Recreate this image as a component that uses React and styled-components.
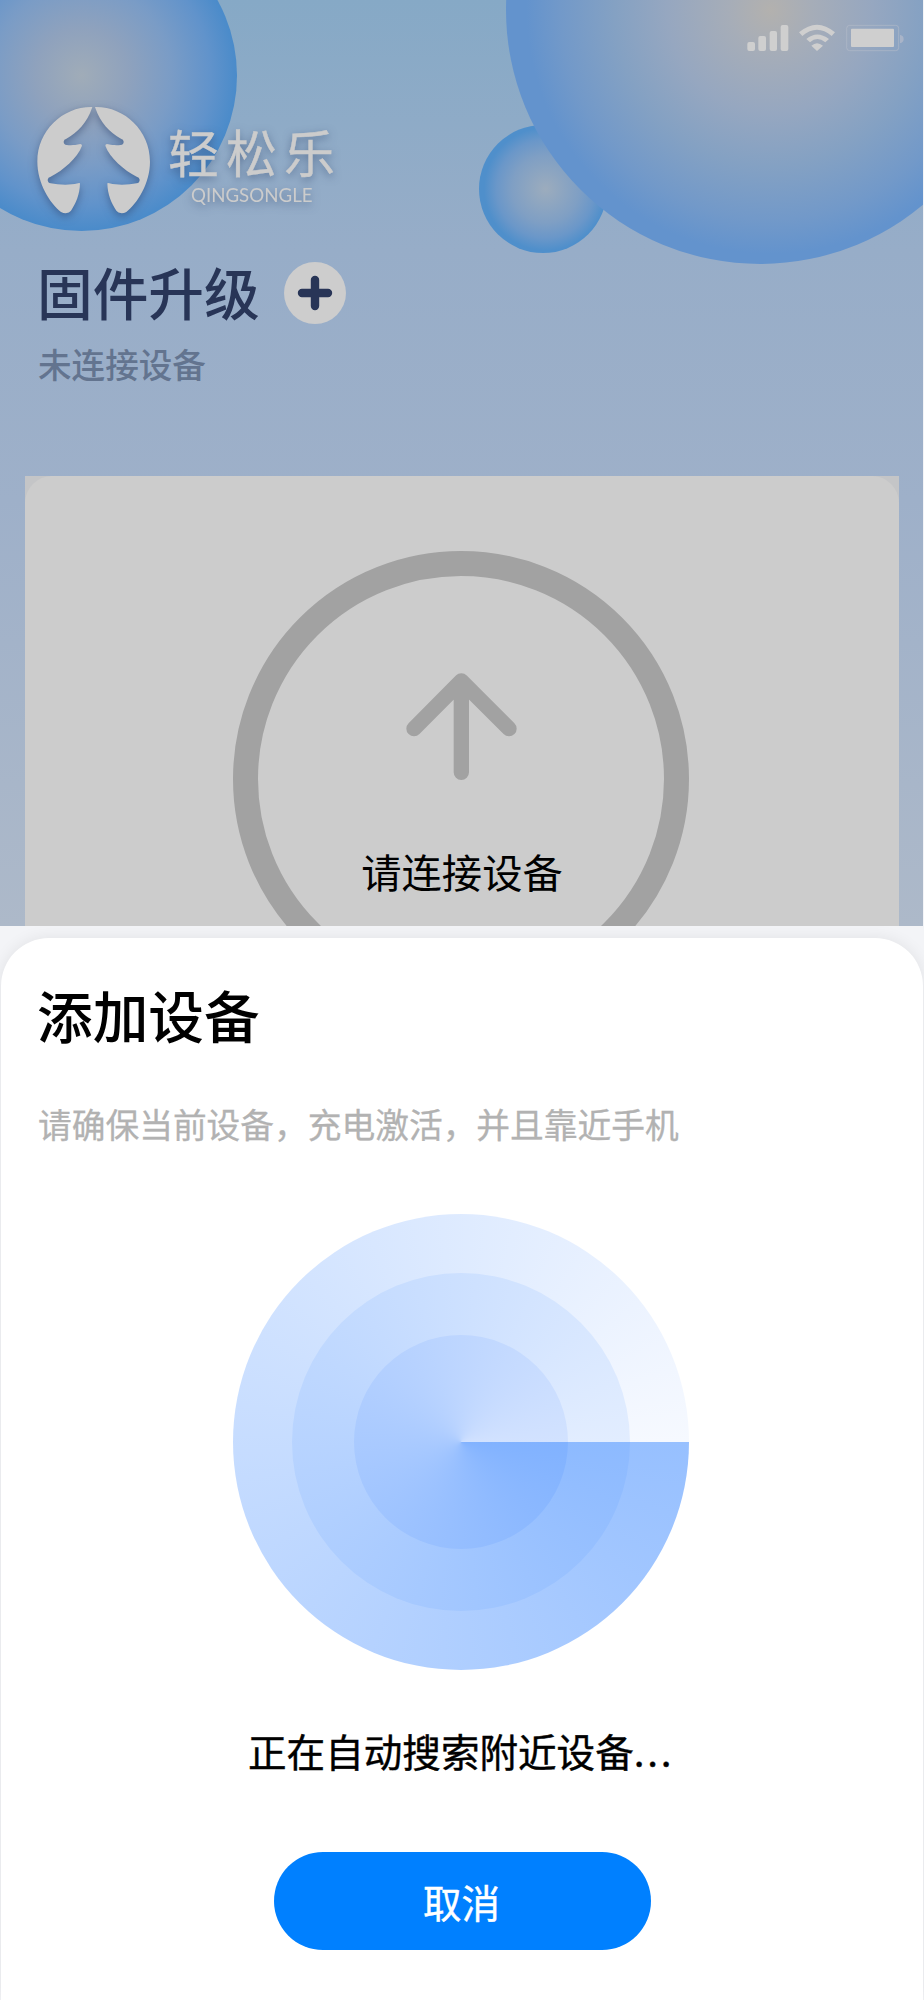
import React from 'react'
import styled, { createGlobalStyle } from 'styled-components'

const GlobalStyle = createGlobalStyle`
  * {
    box-sizing: border-box;
  }
  body {
    margin: 0;
    background: #fff;
    font-family: 'Noto Sans CJK SC', 'Noto Sans', sans-serif;
  }
`

const Screen = styled.div`
  width: 924px;
  height: 2000px;
  display: flex;
  flex-direction: column;
  overflow: hidden;
  background: #f3f4f7;
`

const Hero = styled.header`
  position: relative;
  width: 923px;
  height: 926px;
  flex: none;
  display: flex;
  flex-direction: column;
  overflow: hidden;
  background: linear-gradient(180deg, #86a9c6 0, #97adc8 250px, #9eb0c9 500px, #adb9c9 926px);
`

const Bubble = styled.div`
  position: absolute;
  left: ${({ $x, $r }) => $x - $r}px;
  top: ${({ $y, $r }) => $y - $r}px;
  width: ${({ $r }) => $r * 2}px;
  height: ${({ $r }) => $r * 2}px;
  border-radius: 50%;
  background: radial-gradient(circle closest-side at ${({ $focus = '50% 50%' }) => $focus}, ${({ $stops }) => $stops});
`

const StatusBar = styled.div`
  position: relative;
  flex: none;
  height: 106px;
  padding: 24px 17px 0 0;
  display: flex;
  justify-content: flex-end;
  svg {
    display: block;
  }
`

const Brand = styled.div`
  position: relative;
  flex: none;
  height: 110px;
  padding-left: 35px;
  display: flex;
  filter: drop-shadow(0 3px 4px rgba(40, 60, 100, 0.5));
  svg {
    display: block;
    flex: none;
  }
`

const BrandText = styled.div`
  display: flex;
  flex-direction: column;
  gap: 9px;
  padding: 20px 0 0 15px;
  color: #ccc;
`

const BrandName = styled.div`
  font-size: 51px;
  line-height: 50px;
  letter-spacing: 7px;
  font-weight: 400;
  -webkit-text-stroke: 0.4px currentColor;
`

const BrandLatin = styled.div`
  padding-left: 23px;
  font-family: Lato, sans-serif;
  font-size: 18.7px;
  line-height: 20px;
`

const TitleRow = styled.div`
  position: relative;
  flex: none;
  height: 62px;
  margin-top: 46px;
  padding-left: 37px;
  display: flex;
  align-items: center;
  gap: 24px;
`

const Title = styled.h1`
  margin: 0;
  padding-bottom: ${({ $lift = 0 }) => $lift}px;
  font-size: 55.7px;
  line-height: 62px;
  font-weight: 500;
  color: ${({ $color = '#000' }) => $color};
`

const AddButton = styled.button`
  width: 62px;
  height: 62px;
  padding: 0;
  border: 0;
  border-radius: 50%;
  background: #cdcdcd;
  svg {
    display: block;
  }
`

const Status = styled.p`
  flex: none;
  margin: 20px 0 0 38px;
  font-size: 33.6px;
  line-height: 40px;
  font-weight: 500;
  color: #63748f;
`

const CardFrame = styled.div`
  flex: 1;
  min-height: 0;
  margin: 92px 24px 0 25px;
  background: #c4c5c7;
`

const Card = styled.section`
  height: 600px;
  padding-top: 75px;
  border-radius: 27px;
  background: #ccc;
`

const Ring = styled.div`
  width: 456px;
  height: 456px;
  margin-left: 208px;
  padding-top: 97px;
  border: 25px solid #a2a2a2;
  border-radius: 50%;
  display: flex;
  flex-direction: column;
  align-items: center;
  gap: 65px;
`

const RingLabel = styled.div`
  padding-left: 2px;
  font-size: 40.3px;
  line-height: 50px;
  color: #000;
`

const SheetFrame = styled.div`
  flex: 1;
  padding: 12px 1px 0;
  display: flex;
`

const Sheet = styled.section`
  flex: 1;
  display: flex;
  flex-direction: column;
  padding: 45px 37px 0 36px;
  border-radius: 48px 48px 0 0;
  background: #fff;
  box-shadow: 0 0 16px rgba(0, 0, 0, 0.08);
`

const Hint = styled.p`
  margin: 59px 0 0 1px;
  font-size: 33.72px;
  line-height: 40px;
  color: #b2b2b2;
  -webkit-text-stroke: 0.3px currentColor;
`

const Disc = styled.div`
  width: ${({ $size }) => $size}px;
  height: ${({ $size }) => $size}px;
  flex: none;
  border-radius: 50%;
  display: flex;
  align-items: center;
  justify-content: center;
  background: conic-gradient(from 90deg, ${({ $from }) => $from}, ${({ $to }) => $to});
`

const Radar = styled.div`
  margin: 70px 0 0 196px;
`

const Searching = styled.p`
  margin: 55px 0 0 211px;
  font-size: 38.6px;
  line-height: 50px;
  color: #000;
  -webkit-text-stroke: 0.4px currentColor;
  span {
    letter-spacing: 2.8px;
  }
`

const CancelButton = styled.button`
  width: 377px;
  height: 98px;
  margin: 77px 0 0 237px;
  padding: 0 2px 0 0;
  border: 0;
  border-radius: 49px;
  background: #0080ff;
  color: #fff;
  font-family: inherit;
  font-size: 38.6px;
  line-height: 50px;
  -webkit-text-stroke: 0.4px currentColor;
`

const halfTree =
  'M277 81C190 79 112 150 112 245C112 310 150 370 183 396Q190 400 197 400Q208 399 213 392C228 370 239 345 240 310Q238 308 234 310C205 317 175 314 152 310Q143 308 143 299Q144 291 152 290C190 270 232 235 246 197Q246 192 241 192C225 196 212 196 200 195Q191 193 191 185Q192 178 198 177C235 155 260 130 276 84Z'

const TreeLogo = () => (
  <svg width="118" height="110" viewBox="105 78 354 330" fill="#ccc">
    <path d={halfTree} />
    <path d={halfTree} transform="translate(562 0) scale(-1 1)" />
  </svg>
)

const StatusIcons = () => (
  <svg width="160" height="28" viewBox="858 72 480 84" fill="#cfcfcf">
    <rect x="862" y="126" width="23" height="27" rx="6" />
    <rect x="895" y="108" width="23" height="45" rx="6" />
    <rect x="929" y="93" width="22" height="60" rx="6" />
    <rect x="962" y="75" width="23" height="78" rx="6" />
    <path d="M1017 97Q1071 51 1125 97L1115 108Q1071 71 1027 108Z" />
    <path d="M1039 117Q1071 90 1107 117L1096 127Q1071 107 1050 127Z" />
    <path d="M1054 137Q1071 122 1089 137L1071 153Z" />
    <rect x="1160" y="76" width="156" height="76" rx="9" fill="none" stroke="#b6bdca" strokeOpacity=".6" strokeWidth="3" />
    <rect x="1173" y="86" width="129" height="55" rx="3" />
    <path d="M1320 104Q1331 107 1331 117Q1331 127 1320 130Z" fill="#a9b4c8" />
  </svg>
)

const PlusIcon = () => (
  <svg width="62" height="62" viewBox="0 0 62 62" stroke="#283557" strokeWidth="8.4" strokeLinecap="round">
    <path d="M18 31H44M31 18V44" />
  </svg>
)

const ArrowIcon = () => (
  <svg width="111" height="108" viewBox="196 101 333 324" fill="none" stroke="#a2a2a2" strokeWidth="46" strokeLinecap="round" strokeLinejoin="round">
    <path d="M220 268L362 125L505 268M362 125V399" />
  </svg>
)

const App = () => (
  <>
    <GlobalStyle />
    <Screen>
      <Hero>
        <Bubble $x={81} $y={75} $r={155.5} $stops="#a0acb8 0, #8fa2bd 30%, #7a9cc6 58%, #6193cb 83%, #4a8bca 100%" />
        <Bubble $x={543} $y={189} $r={64} $focus="52% 50%" $stops="#9cacbd 0, #7f9fc4 55%, #6a97c9 80%, #4f8fcb 100%" />
        <Bubble
          $x={760}
          $y={10}
          $r={254}
          $focus="52% 50%"
          $stops="#b3b1ae 0, #a6adb8 17%, #96a7c0 42%, #84a1c3 64%, #7299c9 86%, #6393cd 100%"
        />
        <StatusBar>
          <StatusIcons />
        </StatusBar>
        <Brand>
          <TreeLogo />
          <BrandText>
            <BrandName>轻松乐</BrandName>
            <BrandLatin>QINGSONGLE</BrandLatin>
          </BrandText>
        </Brand>
        <TitleRow>
          <Title $color="#283557" $lift={5}>
            固件升级
          </Title>
          <AddButton aria-label="添加设备">
            <PlusIcon />
          </AddButton>
        </TitleRow>
        <Status>未连接设备</Status>
        <CardFrame>
          <Card>
            <Ring>
              <ArrowIcon />
              <RingLabel>请连接设备</RingLabel>
            </Ring>
          </Card>
        </CardFrame>
      </Hero>
      <SheetFrame>
        <Sheet>
          <Title>添加设备</Title>
          <Hint>请确保当前设备，充电激活，并且靠近手机</Hint>
          <Radar>
            <Disc $size={456} $from="#97c0ff" $to="#f6f9ff">
              <Disc $size={338} $from="#8dbaff" $to="#e2edff">
                <Disc $size={214} $from="#81b2ff" $to="#d2e2ff" />
              </Disc>
            </Disc>
          </Radar>
          <Searching>
            正在自动搜索附近设备<span>...</span>
          </Searching>
          <CancelButton>取消</CancelButton>
        </Sheet>
      </SheetFrame>
    </Screen>
  </>
)

export default App
